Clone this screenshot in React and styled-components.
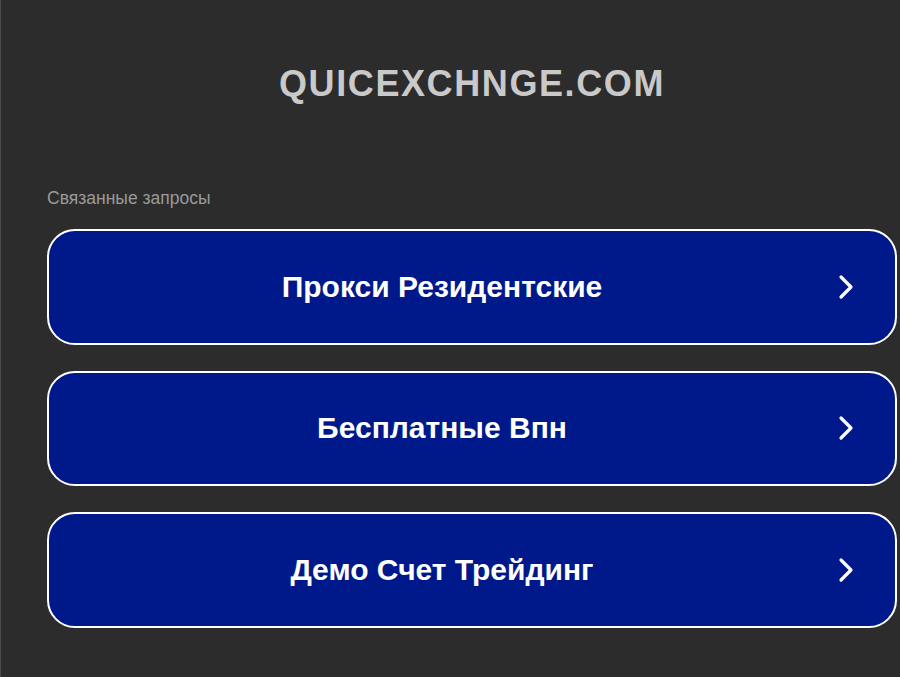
import React from "react";
import styled, { createGlobalStyle } from "styled-components";

const Global = createGlobalStyle`
  html, body { margin: 0; padding: 0; background: #2c2c2c; }
  body { font-family: "Liberation Sans", Arial, sans-serif; }
`;

const Page = styled.div`
  min-height: 677px;
  box-sizing: border-box;
  border-left: 1px solid #4a4a4a;
  padding: 0 3px 0 46px;
`;

const Title = styled.h1`
  margin: 0;
  padding: 64px 0 0;
  height: 120px;
  box-sizing: border-box;
  text-align: center;
  font-size: 36px;
  line-height: 40px;
  font-weight: 700;
  letter-spacing: 1.6px;
  color: #c9c9c9;
`;

const Label = styled.div`
  margin-top: 69px;
  font-size: 17.5px;
  line-height: 18px;
  color: #9a9a9a;
`;

const List = styled.div`
  margin-top: 22px;
  display: flex;
  flex-direction: column;
  gap: 26px;
`;

const Item = styled.a`
  display: flex;
  align-items: center;
  height: 115.5px;
  box-sizing: border-box;
  border: 2px solid #ffffff;
  border-radius: 28px;
  background: #00198a;
  color: #fff;
  text-decoration: none;
  padding-right: 38px;
`;

const ItemText = styled.span`
  flex: 1;
  text-align: center;
  font-size: 30px;
  font-weight: 700;
`;

const Chevron = () => (
  <svg width="22" height="26" viewBox="0 0 22 26" fill="none">
    <path d="M6 3 L16 13 L6 23" stroke="#fff" strokeWidth="3.2" strokeLinecap="round" strokeLinejoin="round" />
  </svg>
);

const items = ["Прокси Резидентские", "Бесплатные Впн", "Демо Счет Трейдинг"];

export default function App() {
  return (
    <>
      <Global />
      <Page>
        <Title>QUICEXCHNGE.COM</Title>
        <Label>Связанные запросы</Label>
        <List>
          {items.map((t) => (
            <Item key={t} href="#">
              <ItemText>{t}</ItemText>
              <Chevron />
            </Item>
          ))}
        </List>
      </Page>
    </>
  );
}
